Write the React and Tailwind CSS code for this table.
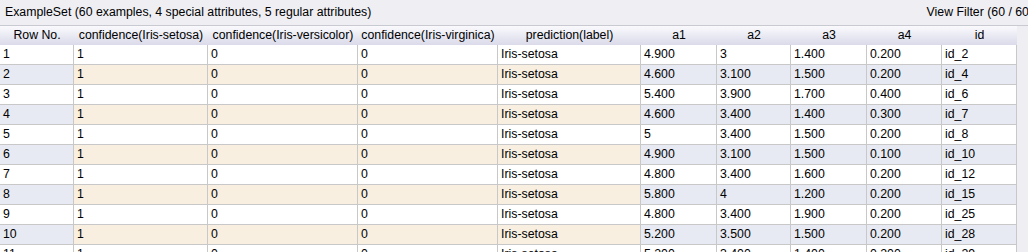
import React from 'react';

const columns = [
  { label: 'Row No.', w: 'w-[74px]', kind: 'row' },
  { label: 'confidence(Iris-setosa)', w: 'w-[134px]', kind: 'nom' },
  { label: 'confidence(Iris-versicolor)', w: 'w-[150px]', kind: 'nom' },
  { label: 'confidence(Iris-virginica)', w: 'w-[140px]', kind: 'nom' },
  { label: 'prediction(label)', w: 'w-[143px]', kind: 'nom' },
  { label: 'a1', w: 'w-[76px]', kind: 'num' },
  { label: 'a2', w: 'w-[74px]', kind: 'num' },
  { label: 'a3', w: 'w-[76px]', kind: 'num' },
  { label: 'a4', w: 'w-[75px]', kind: 'num' },
  { label: 'id', w: 'w-[75px]', kind: 'num' },
];

const data = [
  ['4.900', '3', '1.400', '0.200', 'id_2'],
  ['4.600', '3.100', '1.500', '0.200', 'id_4'],
  ['5.400', '3.900', '1.700', '0.400', 'id_6'],
  ['4.600', '3.400', '1.400', '0.300', 'id_7'],
  ['5', '3.400', '1.500', '0.200', 'id_8'],
  ['4.900', '3.100', '1.500', '0.100', 'id_10'],
  ['4.800', '3.400', '1.600', '0.200', 'id_12'],
  ['5.800', '4', '1.200', '0.200', 'id_15'],
  ['4.800', '3.400', '1.900', '0.200', 'id_25'],
  ['5.200', '3.500', '1.500', '0.200', 'id_28'],
  ['5.200', '3.400', '1.400', '0.200', 'id_29'],
];

const cellBg = (kind, odd) => {
  if (odd) return 'bg-white';
  if (kind === 'nom') return 'bg-[#f8efe1]';
  return 'bg-[#e7eaf2]';
};

export default function App() {
  return (
    <div className="w-[1028px] h-[252px] overflow-hidden bg-[#eeeef3] text-[12.3px] text-black font-['Liberation_Sans',Arial,sans-serif]">
      {/* Top bar */}
      <div className="h-[26px] flex items-center justify-between pl-[5px] border-b border-[#c9c9d2] overflow-hidden">
        <span>ExampleSet (60 examples, 4 special attributes, 5 regular attributes)</span>
        <span className="whitespace-nowrap mr-[-5px]">View Filter (60 / 60)</span>
      </div>

      {/* Header */}
      <div className="flex h-[19px] w-[1017px] bg-gradient-to-b from-[#fafafd] to-[#dadaea]">
        {columns.map((c) => (
          <div key={c.label} className={`${c.w} shrink-0 flex items-center justify-center whitespace-nowrap overflow-hidden`}>
            {c.label}
          </div>
        ))}
      </div>

      {/* Rows */}
      {data.map((r, i) => {
        const odd = i % 2 === 0;
        const cells = [String(i + 1), '1', '0', '0', 'Iris-setosa', ...r];
        return (
          <div key={i} className="flex h-5 w-[1017px]">
            {columns.map((c, j) => (
              <div
                key={j}
                className={`${c.w} shrink-0 h-5 border-r border-b border-[#c8c8c8] pl-[3px] flex items-center whitespace-nowrap overflow-hidden ${cellBg(c.kind, odd)}`}
              >
                {cells[j]}
              </div>
            ))}
          </div>
        );
      })}
    </div>
  );
}
